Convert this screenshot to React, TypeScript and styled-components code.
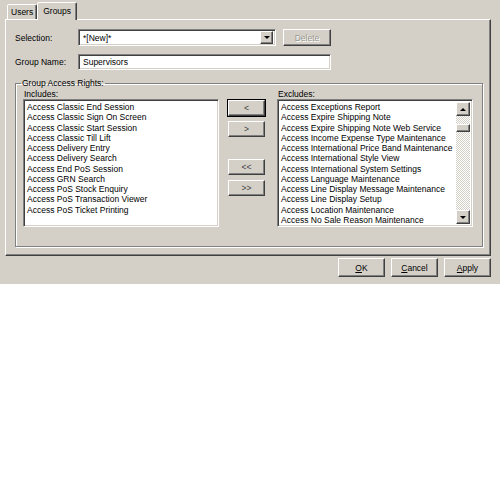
import React from 'react'
import styled, { createGlobalStyle, css } from 'styled-components'

const GlobalStyle = createGlobalStyle`
    html, body {
        margin: 0;
        padding: 0;
        background: #fff;
    }
    body {
        font-family: 'Liberation Sans', Arial, sans-serif;
        font-size: 8.5px;
        color: #000;
    }
    * { box-sizing: border-box; }
`;

const raised = css`
    border: 1px solid;
    border-color: #fff #404040 #404040 #fff;
    box-shadow: inset -1px -1px 0 #808080;
`;

const sunken = css`
    border: 1px solid;
    border-color: #808080 #fff #fff #808080;
    box-shadow: inset 1px 1px 0 #404040, inset -1px -1px 0 #d4d0c8;
`;

const Window = styled.div`
    width: 500px;
    height: 284px;
    background: #d4d0c8;
    padding: 2px 9px 0 5px;
    display: flex;
    flex-direction: column;
`;

const TabStrip = styled.div`
    display: flex;
    align-items: flex-end;
    height: 17px;
    padding-left: 2px;
`;

const Tab = styled.div<{ $active?: boolean }>`
    position: relative;
    z-index: ${p => (p.$active ? 2 : 1)};
    height: ${p => (p.$active ? 18 : 15)}px;
    margin-bottom: ${p => (p.$active ? -1 : 0)}px;
    padding: ${p => (p.$active ? '3px 5px 0' : '2px 3px 0')};
    background: #d4d0c8;
    border: 1px solid;
    border-bottom: none;
    border-color: #fff #404040 transparent #fff;
    box-shadow: inset -1px 0 0 #808080;
    border-radius: 2px 2px 0 0;
`;

const TabPanel = styled.div`
    ${raised};
    width: 486px;
    height: 237px;
    padding: 9px 7px 8px 9px;
    display: flex;
    flex-direction: column;
`;

const FormRow = styled.div`
    display: flex;
    align-items: center;
    height: 17px;
    margin-bottom: 8px;
`;

const FieldLabel = styled.div`
    width: 63px;
`;

const ComboBox = styled.div`
    ${sunken};
    width: 198px;
    height: 17px;
    background: #fff;
    display: flex;
    align-items: center;
    justify-content: space-between;
    padding: 2px 2px 2px 4px;
`;

const DropButton = styled.div`
    ${raised};
    width: 13px;
    height: 13px;
    background: #d4d0c8;
    display: flex;
    align-items: center;
    justify-content: center;
`;

const Arrow = styled.div<{ $up?: boolean }>`
    width: 0;
    height: 0;
    border-left: 3px solid transparent;
    border-right: 3px solid transparent;
    ${p => (p.$up ? 'border-bottom: 3px solid #000;' : 'border-top: 3px solid #000;')}
`;

const TextInput = styled.div`
    ${sunken};
    width: 253px;
    height: 16px;
    background: #fff;
    padding: 2px 4px;
    display: flex;
    align-items: center;
`;

const Button = styled.div<{ $width?: number; $height?: number; $disabled?: boolean; $focused?: boolean }>`
    ${raised};
    width: ${p => p.$width ?? 47}px;
    height: ${p => p.$height ?? 19}px;
    background: #d4d0c8;
    display: flex;
    align-items: center;
    justify-content: center;
    color: ${p => (p.$disabled ? '#9a9890' : '#000')};
    text-shadow: ${p => (p.$disabled ? '1px 1px 0 #fff' : 'none')};
    ${p => p.$focused && css`
        outline: 1px solid #000;
        outline-offset: 0;
    `}
`;

const DeleteButton = styled(Button)`
    margin-left: 7px;
`;

const GroupBox = styled.fieldset`
    margin: 0;
    padding: 1px 9px 0 7px;
    height: 179px;
    border: 1px solid #808080;
    box-shadow: inset 1px 1px 0 #fff, 1px 1px 0 #fff;
`;

const Legend = styled.legend`
    padding: 0 1px;
    margin-left: -2px;
`;

const ListsGrid = styled.div`
    display: grid;
    grid-template-columns: 196px 1fr 196px;
    grid-template-rows: 10px 128px;
`;

const ListLabel = styled.div`
    padding-left: 1px;
`;

const ListBox = styled.div`
    ${sunken};
    background: #fff;
    display: flex;
    padding: 2px 2px 0 2px;
`;

const Items = styled.div`
    flex: 1;
    padding: 0 0 0 1px;
    overflow: hidden;
`;

const Item = styled.div`
    line-height: 10.25px;
    white-space: nowrap;
`;

const MoveButtons = styled.div`
    display: flex;
    flex-direction: column;
    padding: 1px 0 0 9px;
`;

const MoveButton = styled(Button)<{ $gap?: number }>`
    margin-top: ${p => p.$gap ?? 0}px;
    color: #404040;
`;

const ScrollBar = styled.div`
    width: 14px;
    margin-bottom: 2px;
    display: flex;
    flex-direction: column;
`;

const ScrollArrow = styled.div`
    ${raised};
    height: 14px;
    background: #d4d0c8;
    display: flex;
    align-items: center;
    justify-content: center;
`;

const Track = styled.div`
    flex: 1;
    background-color: #fff;
    background-image: conic-gradient(#fff 25%, #d4d0c8 0 50%, #fff 0 75%, #d4d0c8 0);
    background-size: 2px 2px;
`;

const Thumb = styled.div`
    ${raised};
    height: 8px;
    margin-top: 8px;
    background: #d4d0c8;
`;

const Footer = styled.div`
    display: flex;
    justify-content: flex-end;
    gap: 6px;
    margin-top: 2px;
`;

const Key = styled.span`
    text-decoration: underline;
`;

const includes = [
    'Access Classic End Session',
    'Access Classic Sign On Screen',
    'Access Classic Start Session',
    'Access Classic Till Lift',
    'Access Delivery Entry',
    'Access Delivery Search',
    'Access End PoS Session',
    'Access GRN Search',
    'Access PoS Stock Enquiry',
    'Access PoS Transaction Viewer',
    'Access PoS Ticket Printing',
]

const excludes = [
    'Access Exceptions Report',
    'Access Expire Shipping Note',
    'Access Expire Shipping Note Web Service',
    'Access Income Expense Type Maintenance',
    'Access International Price Band Maintenance',
    'Access International Style View',
    'Access International System Settings',
    'Access Language Maintenance',
    'Access Line Display Message Maintenance',
    'Access Line Display Setup',
    'Access Location Maintenance',
    'Access No Sale Reason Maintenance',
]

function App() {
    return (
        <>
            <GlobalStyle />
            <Window>
                <TabStrip>
                    <Tab>Users</Tab>
                    <Tab $active>Groups</Tab>
                </TabStrip>
                <TabPanel>
                    <FormRow>
                        <FieldLabel>Selection:</FieldLabel>
                        <ComboBox>
                            <span>*[New]*</span>
                            <DropButton><Arrow /></DropButton>
                        </ComboBox>
                        <DeleteButton $width={48} $height={17} $disabled>Delete</DeleteButton>
                    </FormRow>
                    <FormRow>
                        <FieldLabel>Group Name:</FieldLabel>
                        <TextInput>Supervisors</TextInput>
                    </FormRow>
                    <GroupBox>
                        <Legend>Group Access Rights:</Legend>
                        <ListsGrid>
                            <ListLabel>Includes:</ListLabel>
                            <div />
                            <ListLabel>Excludes:</ListLabel>
                            <ListBox>
                                <Items>
                                    {includes.map(i => <Item key={i}>{i}</Item>)}
                                </Items>
                            </ListBox>
                            <MoveButtons>
                                <MoveButton $width={37} $height={16} $focused>&lt;</MoveButton>
                                <MoveButton $width={37} $height={16} $gap={5}>&gt;</MoveButton>
                                <MoveButton $width={37} $height={16} $gap={22}>&lt;&lt;</MoveButton>
                                <MoveButton $width={37} $height={16} $gap={5}>&gt;&gt;</MoveButton>
                            </MoveButtons>
                            <ListBox>
                                <Items>
                                    {excludes.map(i => <Item key={i}>{i}</Item>)}
                                </Items>
                                <ScrollBar>
                                    <ScrollArrow><Arrow $up /></ScrollArrow>
                                    <Track><Thumb /></Track>
                                    <ScrollArrow><Arrow /></ScrollArrow>
                                </ScrollBar>
                            </ListBox>
                        </ListsGrid>
                    </GroupBox>
                </TabPanel>
                <Footer>
                    <Button><span><Key>O</Key>K</span></Button>
                    <Button><span><Key>C</Key>ancel</span></Button>
                    <Button><span><Key>A</Key>pply</span></Button>
                </Footer>
            </Window>
        </>
    )
}

export default App
